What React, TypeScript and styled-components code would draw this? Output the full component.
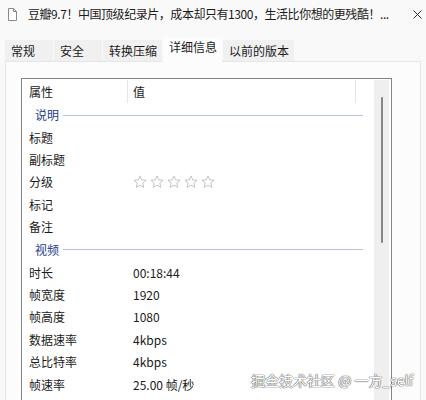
import React from "react";
import styled, { createGlobalStyle } from "styled-components";

const Global = createGlobalStyle`
  html, body {
    margin: 0;
    padding: 0;
    background: #f9f9f9;
  }
  body {
    font-family: "Noto Sans CJK SC", "Noto Sans", sans-serif;
    font-size: 12px;
    color: #1a1a1a;
  }
`;

const Window = styled.div`
  position: relative;
  width: 426px;
  height: 400px;
  overflow: hidden;
  background: #f9f9f9;
  display: flex;
  flex-direction: column;
`;

const TitleBar = styled.div`
  height: 28px;
  flex-shrink: 0;
  display: flex;
  align-items: center;
  padding-left: 8px;
`;

const FileIcon = styled.svg`
  width: 9px;
  height: 13px;
  flex-shrink: 0;
`;

const Title = styled.div`
  flex: 1;
  min-width: 0;
  margin-left: 11px;
  white-space: nowrap;
  font-size: 12px;
  line-height: 16px;
  letter-spacing: -0.45px;
  color: #1a1a1a;
  overflow: hidden;
`;

const Close = styled.svg`
  width: 9px;
  height: 9px;
  margin: 0 4px 0 8px;
  flex-shrink: 0;
`;

const TabStrip = styled.div`
  margin-top: 9px;
  height: 24px;
  flex-shrink: 0;
  display: flex;
  align-items: flex-end;
  gap: 1px;
  padding-left: 5px;
`;

const Tab = styled.div<{ $active?: boolean }>`
  position: relative;
  z-index: ${(p) => (p.$active ? 1 : 0)};
  box-sizing: border-box;
  min-width: 48px;
  height: ${(p) => (p.$active ? "25px" : "21px")};
  margin-bottom: ${(p) => (p.$active ? "-1px" : "0")};
  padding: 0 5px 0 ${(p) => (p.$active ? "6px" : "6px")};
  background: ${(p) => (p.$active ? "#fcfcfc" : "#f0f0f0")};
  line-height: ${(p) => (p.$active ? "20px" : "21px")};
  font-size: 12px;
  color: #1a1a1a;
  white-space: nowrap;
`;

const Panel = styled.div`
  flex: 1;
  display: flex;
  flex-direction: column;
  margin: 0 5px;
  padding: 16px 28px 0 15px;
  background: #fcfcfc;
  border: 1px solid #e6e6e6;
  border-bottom: none;
  min-height: 0;
`;

const ListBox = styled.div`
  flex: 1;
  display: flex;
  background: #ffffff;
  border: 1px solid #838383;
  border-bottom: none;
  min-height: 0;
`;

const ListBody = styled.div`
  flex: 1;
  display: flex;
  flex-direction: column;
`;

const HeaderRow = styled.div`
  height: 24px;
  display: flex;
  flex-shrink: 0;
`;

const HeaderCell = styled.div<{ $width: number; $pad: number }>`
  box-sizing: border-box;
  width: ${(p) => p.$width}px;
  margin-top: 1px;
  padding-left: ${(p) => p.$pad}px;
  border-right: 1px solid #e5e5e5;
  line-height: 23px;
  font-size: 12px;
  color: #1a1a1a;
`;

const GroupRow = styled.div`
  height: 23px;
  display: flex;
  align-items: center;
  padding-left: 13px;
  color: #1e3a8c;
  font-size: 12px;
  flex-shrink: 0;
`;

const GroupRule = styled.div`
  flex: 1;
  height: 1px;
  margin: 1px 11px 0 4px;
  background: #b7c3d6;
`;

const Row = styled.div`
  height: 22.4px;
  display: flex;
  align-items: center;
  flex-shrink: 0;
  font-size: 12px;
  color: #1a1a1a;
`;

const Label = styled.div`
  box-sizing: border-box;
  width: 111px;
  padding-left: 7px;
  white-space: nowrap;
`;

const Value = styled.div`
  display: flex;
  align-items: center;
  gap: 3px;
  white-space: nowrap;
`;

const Star = styled.svg`
  width: 14px;
  height: 14px;
`;

const ScrollTrack = styled.div`
  width: 15px;
  margin: 1px 2px 0 0;
  background: #efefef;
  flex-shrink: 0;
`;

const ScrollThumb = styled.div`
  width: 2px;
  height: 146px;
  margin: 17px 0 0 7px;
  background: #868686;
  border-radius: 1px;
`;

const Watermark = styled.div`
  position: absolute;
  left: 251px;
  top: 370px;
  font-size: 14px;
  line-height: 20px;
  color: #ffffff;
  white-space: nowrap;
  text-shadow: 0 0 1px #5e5e5e, 0 0 1px #5e5e5e, 0 0 1px #5e5e5e;
`;

const StarIcon = () => (
  <Star viewBox="0 0 24 24">
    <path
      d="M12 1.5l3 6.9 7.4.6-5.6 4.9 1.7 7.3-6.5-3.9-6.5 3.9 1.7-7.3L1.6 9l7.4-.6z"
      fill="#ffffff"
      stroke="#b2b2b2"
      strokeWidth="1.3"
      strokeLinejoin="round"
    />
  </Star>
);

type Item = { label: string; value?: string; stars?: boolean };

const described: Item[] = [
  { label: "标题" },
  { label: "副标题" },
  { label: "分级", stars: true },
  { label: "标记" },
  { label: "备注" },
];

const video: Item[] = [
  { label: "时长", value: "00:18:44" },
  { label: "帧宽度", value: "1920" },
  { label: "帧高度", value: "1080" },
  { label: "数据速率", value: "4kbps" },
  { label: "总比特率", value: "4kbps" },
  { label: "帧速率", value: "25.00 帧/秒" },
];

const tabs = ["常规", "安全", "转换压缩", "详细信息", "以前的版本"];

const PropRow = ({ item }: { item: Item }) => (
  <Row>
    <Label>{item.label}</Label>
    <Value>
      {item.stars
        ? [0, 1, 2, 3, 4].map((i) => <StarIcon key={i} />)
        : item.value}
    </Value>
  </Row>
);

export default function App() {
  return (
    <>
      <Global />
      <Window>
        <TitleBar>
          <FileIcon viewBox="0 0 9 13">
            <path
              d="M0.5 0.5h5l3 3v9h-8z"
              fill="#ffffff"
              stroke="#8a8a8a"
              strokeWidth="1"
              strokeLinejoin="round"
            />
            <path d="M5.5 0.5v3h3" fill="none" stroke="#8a8a8a" strokeWidth="1" />
          </FileIcon>
          <Title>豆瓣9.7！中国顶级纪录片，成本却只有1300，生活比你想的更残酷！...</Title>
          <Close viewBox="0 0 9 9">
            <path d="M0.5 0.5l8 8M8.5 0.5l-8 8" stroke="#333333" strokeWidth="1" />
          </Close>
        </TitleBar>

        <TabStrip>
          {tabs.map((t) => (
            <Tab key={t} $active={t === "详细信息"}>
              {t}
            </Tab>
          ))}
        </TabStrip>

        <Panel>
          <ListBox>
            <ListBody>
              <HeaderRow>
                <HeaderCell $width={106} $pad={7}>属性</HeaderCell>
                <HeaderCell $width={228} $pad={5}>值</HeaderCell>
              </HeaderRow>

              <GroupRow>
                说明
                <GroupRule />
              </GroupRow>
              {described.map((it) => (
                <PropRow key={it.label} item={it} />
              ))}

              <GroupRow>
                视频
                <GroupRule />
              </GroupRow>
              {video.map((it) => (
                <PropRow key={it.label} item={it} />
              ))}
            </ListBody>
            <ScrollTrack>
              <ScrollThumb />
            </ScrollTrack>
          </ListBox>
        </Panel>

        <Watermark>掘金技术社区 @ 一方_self</Watermark>
      </Window>
    </>
  );
}
